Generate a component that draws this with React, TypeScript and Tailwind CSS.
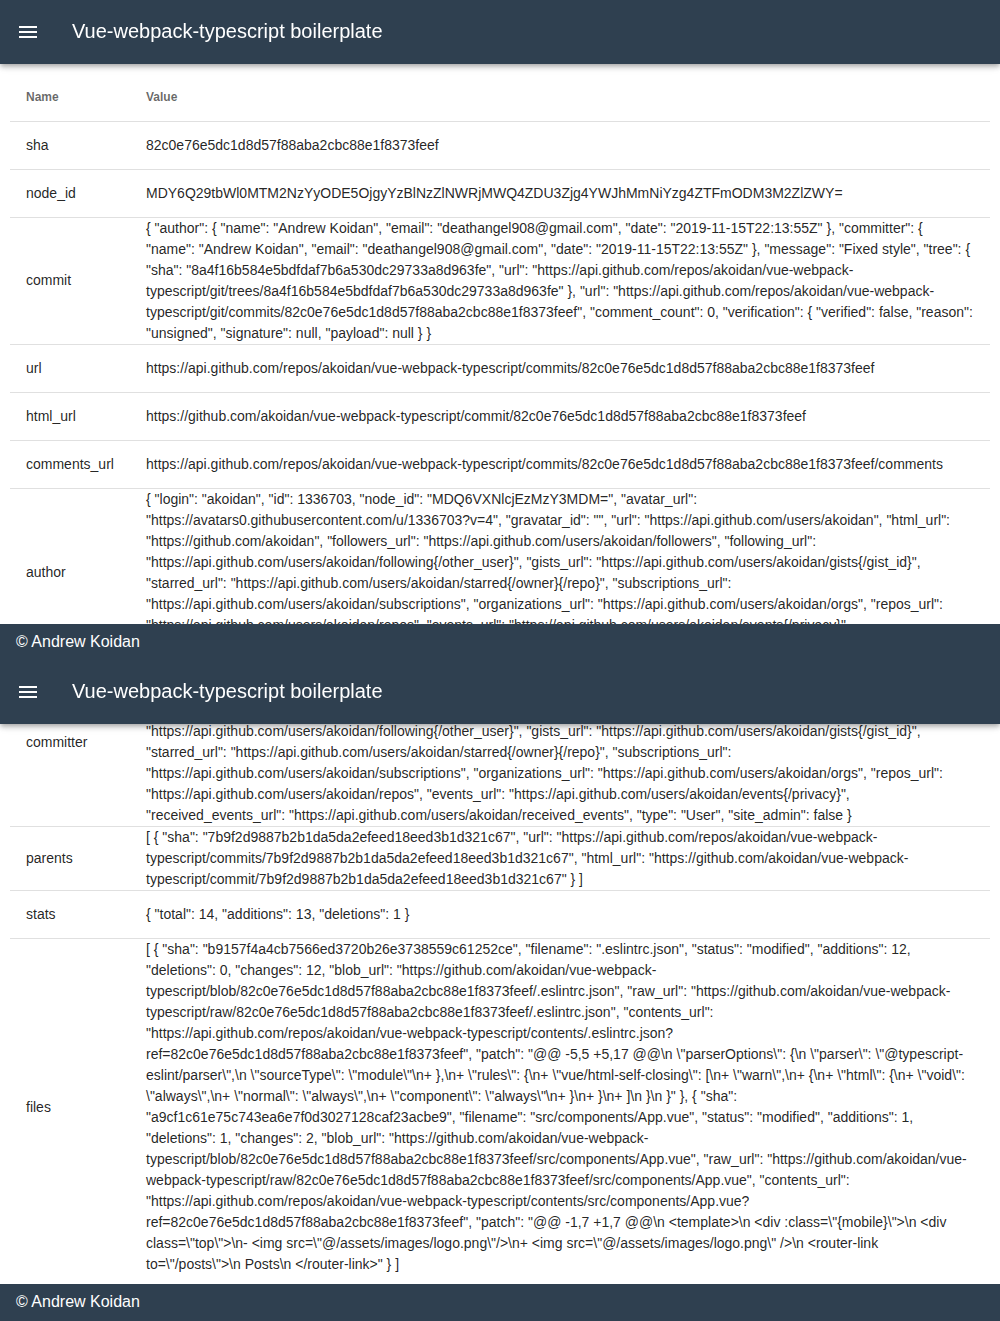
import React from 'react';

type Row = { name: string; value: string };

const SHA = '82c0e76e5dc1d8d57f88aba2cbc88e1f8373feef';

const USER =
  '{ "login": "akoidan", "id": 1336703, "node_id": "MDQ6VXNlcjEzMzY3MDM=", "avatar_url": "https://avatars0.githubusercontent.com/u/1336703?v=4", "gravatar_id": "", "url": "https://api.github.com/users/akoidan", "html_url": "https://github.com/akoidan", "followers_url": "https://api.github.com/users/akoidan/followers", "following_url": "https://api.github.com/users/akoidan/following{/other_user}", "gists_url": "https://api.github.com/users/akoidan/gists{/gist_id}", "starred_url": "https://api.github.com/users/akoidan/starred{/owner}{/repo}", "subscriptions_url": "https://api.github.com/users/akoidan/subscriptions", "organizations_url": "https://api.github.com/users/akoidan/orgs", "repos_url": "https://api.github.com/users/akoidan/repos", "events_url": "https://api.github.com/users/akoidan/events{/privacy}", "received_events_url": "https://api.github.com/users/akoidan/received_events", "type": "User", "site_admin": false }';

const FIRST_ROWS: Row[] = [
  { name: 'sha', value: SHA },
  {
    name: 'node_id',
    value: 'MDY6Q29tbWl0MTM2NzYyODE5OjgyYzBlNzZlNWRjMWQ4ZDU3Zjg4YWJhMmNiYzg4ZTFmODM3M2ZlZWY=',
  },
  {
    name: 'commit',
    value:
      '{ "author": { "name": "Andrew Koidan", "email": "deathangel908@gmail.com", "date": "2019-11-15T22:13:55Z" }, "committer": { "name": "Andrew Koidan", "email": "deathangel908@gmail.com", "date": "2019-11-15T22:13:55Z" }, "message": "Fixed style", "tree": { "sha": "8a4f16b584e5bdfdaf7b6a530dc29733a8d963fe", "url": "https://api.github.com/repos/akoidan/vue-webpack-typescript/git/trees/8a4f16b584e5bdfdaf7b6a530dc29733a8d963fe" }, "url": "https://api.github.com/repos/akoidan/vue-webpack-typescript/git/commits/82c0e76e5dc1d8d57f88aba2cbc88e1f8373feef", "comment_count": 0, "verification": { "verified": false, "reason": "unsigned", "signature": null, "payload": null } }',
  },
  { name: 'url', value: `https://api.github.com/repos/akoidan/vue-webpack-typescript/commits/${SHA}` },
  { name: 'html_url', value: `https://github.com/akoidan/vue-webpack-typescript/commit/${SHA}` },
  {
    name: 'comments_url',
    value: `https://api.github.com/repos/akoidan/vue-webpack-typescript/commits/${SHA}/comments`,
  },
  { name: 'author', value: USER },
];

const LAST_ROWS: Row[] = [
  { name: 'committer', value: USER },
  {
    name: 'parents',
    value:
      '[ { "sha": "7b9f2d9887b2b1da5da2efeed18eed3b1d321c67", "url": "https://api.github.com/repos/akoidan/vue-webpack-typescript/commits/7b9f2d9887b2b1da5da2efeed18eed3b1d321c67", "html_url": "https://github.com/akoidan/vue-webpack-typescript/commit/7b9f2d9887b2b1da5da2efeed18eed3b1d321c67" } ]',
  },
  { name: 'stats', value: '{ "total": 14, "additions": 13, "deletions": 1 }' },
  {
    name: 'files',
    value: String.raw`[ { "sha": "b9157f4a4cb7566ed3720b26e3738559c61252ce", "filename": ".eslintrc.json", "status": "modified", "additions": 12, "deletions": 0, "changes": 12, "blob_url": "https://github.com/akoidan/vue-webpack-typescript/blob/82c0e76e5dc1d8d57f88aba2cbc88e1f8373feef/.eslintrc.json", "raw_url": "https://github.com/akoidan/vue-webpack-typescript/raw/82c0e76e5dc1d8d57f88aba2cbc88e1f8373feef/.eslintrc.json", "contents_url": "https://api.github.com/repos/akoidan/vue-webpack-typescript/contents/.eslintrc.json?ref=82c0e76e5dc1d8d57f88aba2cbc88e1f8373feef", "patch": "@@ -5,5 +5,17 @@\n \"parserOptions\": {\n \"parser\": \"@typescript-eslint/parser\",\n \"sourceType\": \"module\"\n+ },\n+ \"rules\": {\n+ \"vue/html-self-closing\": [\n+ \"warn\",\n+ {\n+ \"html\": {\n+ \"void\": \"always\",\n+ \"normal\": \"always\",\n+ \"component\": \"always\"\n+ }\n+ }\n+ ]\n }\n }" }, { "sha": "a9cf1c61e75c743ea6e7f0d3027128caf23acbe9", "filename": "src/components/App.vue", "status": "modified", "additions": 1, "deletions": 1, "changes": 2, "blob_url": "https://github.com/akoidan/vue-webpack-typescript/blob/82c0e76e5dc1d8d57f88aba2cbc88e1f8373feef/src/components/App.vue", "raw_url": "https://github.com/akoidan/vue-webpack-typescript/raw/82c0e76e5dc1d8d57f88aba2cbc88e1f8373feef/src/components/App.vue", "contents_url": "https://api.github.com/repos/akoidan/vue-webpack-typescript/contents/src/components/App.vue?ref=82c0e76e5dc1d8d57f88aba2cbc88e1f8373feef", "patch": "@@ -1,7 +1,7 @@\n <template>\n <div :class=\"{mobile}\">\n <div class=\"top\">\n- <img src=\"@/assets/images/logo.png\"/>\n+ <img src=\"@/assets/images/logo.png\" />\n <router-link to=\"/posts\">\n Posts\n </router-link>" } ]`,
  },
];

function AppBar() {
  return (
    <header className="relative z-10 flex h-16 shrink-0 items-center bg-[#2f4050] px-4 text-white shadow-[0_2px_4px_-1px_rgba(0,0,0,0.2),0_4px_5px_0_rgba(0,0,0,0.14),0_1px_10px_0_rgba(0,0,0,0.12)]">
      <button type="button" aria-label="Menu" className="size-6">
        <svg viewBox="0 0 24 24" className="size-6 fill-current" aria-hidden="true">
          <path d="M3,6H21V8H3V6M3,11H21V13H3V11M3,16H21V18H3V16Z" />
        </svg>
      </button>
      <h1 className="ml-8 pb-0.5 text-xl leading-[30px]">Vue-webpack-typescript boilerplate</h1>
    </header>
  );
}

function CommitTable({ rows, showHead }: { rows: Row[]; showHead?: boolean }) {
  return (
    <table className="w-full table-fixed border-collapse text-left text-sm leading-[21px] text-black/87">
      <colgroup>
        <col className="w-[120px]" />
        <col />
      </colgroup>
      {showHead && (
        <thead>
          <tr className="h-12 border-b border-black/12 text-xs text-black/60">
            <th scope="col" className="px-4 font-bold">Name</th>
            <th scope="col" className="px-4 font-bold">Value</th>
          </tr>
        </thead>
      )}
      <tbody>
        {rows.map((row) => (
          <tr key={row.name} className="h-12 border-b border-black/12 last:border-b-0">
            <th scope="row" className="px-4 font-normal">{row.name}</th>
            <td className="px-4">{row.value}</td>
          </tr>
        ))}
      </tbody>
    </table>
  );
}

function Footer() {
  return (
    <footer className="relative z-20 bg-[#2f4050] px-4 py-1.5 text-base leading-6 text-white">
      © Andrew Koidan
    </footer>
  );
}

export default function App() {
  return (
    <div className="min-h-screen bg-[#2f4050] font-['Liberation_Sans',Arial,sans-serif]">
      <section>
        <AppBar />
        <main className="h-[560px] overflow-y-auto bg-white px-2.5 py-[9px] [scrollbar-width:none]">
          <CommitTable rows={FIRST_ROWS} showHead />
        </main>
        <Footer />
      </section>
      <section>
        <AppBar />
        <main className="flex h-[560px] flex-col-reverse overflow-y-auto bg-white px-2.5 py-[9px] [scrollbar-width:none]">
          <CommitTable rows={LAST_ROWS} />
        </main>
        <Footer />
      </section>
    </div>
  );
}
